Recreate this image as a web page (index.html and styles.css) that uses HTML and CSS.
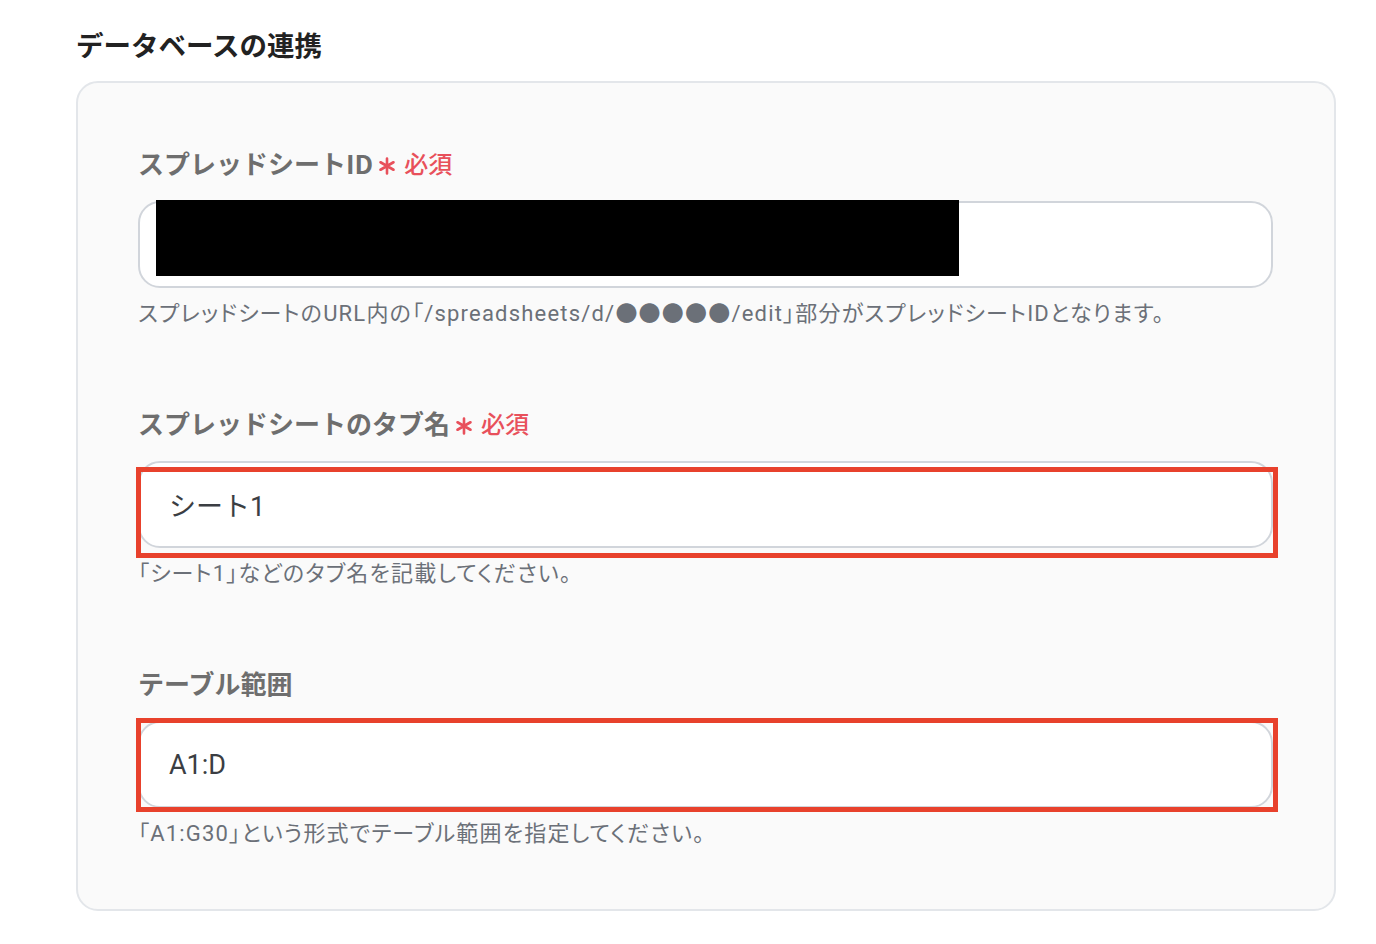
FILE: index.html
```html
<!DOCTYPE html>
<html lang="ja">
<head>
<meta charset="utf-8">
<title>データベースの連携</title>
<link rel="stylesheet" href="styles.css">
</head>
<body>
<div class="page">
  <h2 class="heading">データベースの連携</h2>
  <div class="card">
    <div class="field">
      <div class="label">スプレッドシートID<span class="req"><svg class="ast" viewBox="0 0 18 18" width="18" height="18"><path d="M9 1.5V16.5M2.5 5.25L15.5 12.75M15.5 5.25L2.5 12.75" stroke="#e8505b" stroke-width="2.6" stroke-linecap="round"/></svg>必須</span></div>
      <div class="input-wrap">
        <div class="input"></div>
        <div class="redact"></div>
      </div>
      <div class="help">スプレッドシートのURL内の「/spreadsheets/d/●●●●●/edit」部分がスプレッドシートIDとなります。</div>
    </div>
    <div class="field">
      <div class="label">スプレッドシートのタブ名<span class="req"><svg class="ast" viewBox="0 0 18 18" width="18" height="18"><path d="M9 1.5V16.5M2.5 5.25L15.5 12.75M15.5 5.25L2.5 12.75" stroke="#e8505b" stroke-width="2.6" stroke-linecap="round"/></svg>必須</span></div>
      <div class="input-wrap">
        <div class="input">シート1</div>
        <div class="mark mark-a"></div>
      </div>
      <div class="help">「シート1」などのタブ名を記載してください。</div>
    </div>
    <div class="field">
      <div class="label">テーブル範囲</div>
      <div class="input-wrap">
        <div class="input">A1:D</div>
        <div class="mark mark-b"></div>
      </div>
      <div class="help">「A1:G30」という形式でテーブル範囲を指定してください。</div>
    </div>
  </div>
</div>
</body>
</html>
```
FILE: styles.css
```css
html, body {
  margin: 0;
  padding: 0;
  background: #ffffff;
}
body {
  font-family: Roboto, "Noto Sans CJK JP", sans-serif;
}
.page {
  padding: 26px 0 0 76px;
}
.heading {
  margin: 0 0 19px 0;
  font-size: 27.5px;
  line-height: 36px;
  font-weight: 700;
  color: #222222;
  font-family: "Noto Sans CJK JP", sans-serif;
}
.card {
  width: 1260px;
  box-sizing: border-box;
  background: #fafafa;
  border: 2px solid #e3e6ea;
  border-radius: 22px;
  padding: 63px 61px 60px 60px;
  display: flex;
  flex-direction: column;
  gap: 77px;
}
.field {
  display: flex;
  flex-direction: column;
}
.label {
  font-family: "Noto Sans CJK JP", sans-serif;
  font-size: 26px;
  line-height: 34px;
  font-weight: 700;
  color: #6e6e6e;
  display: flex;
  align-items: center;
  margin-bottom: 21px;
}
.req {
  display: inline-flex;
  align-items: center;
  margin-left: 5px;
  color: #e8505b;
  font-size: 24px;
  font-weight: 500;
}
.ast {
  margin-right: 8px;
  margin-top: 6px;
}
.input-wrap {
  position: relative;
}
.input {
  box-sizing: border-box;
  height: 87px;
  background: #ffffff;
  border: 2px solid #d1d5db;
  border-radius: 22px;
  padding-left: 29px;
  display: flex;
  align-items: center;
  font-size: 27px;
  color: #3b3e43;
  font-family: Roboto, "Noto Sans CJK JP", sans-serif;
}
.redact {
  position: absolute;
  left: 18px;
  top: -1px;
  width: 803px;
  height: 76px;
  background: #000000;
}
.mark {
  position: absolute;
  left: -2px;
  width: 1142px;
  box-sizing: border-box;
  border: 5px solid #e8412c;
}
.mark-a {
  top: 6px;
  height: 91px;
}
.mark-b {
  top: -3px;
  height: 94px;
}
.help {
  margin-top: 11px;
  font-size: 22px;
  line-height: 30px;
  letter-spacing: 1.2px;
  font-feature-settings: "palt";
  color: #6b7078;
}
```
